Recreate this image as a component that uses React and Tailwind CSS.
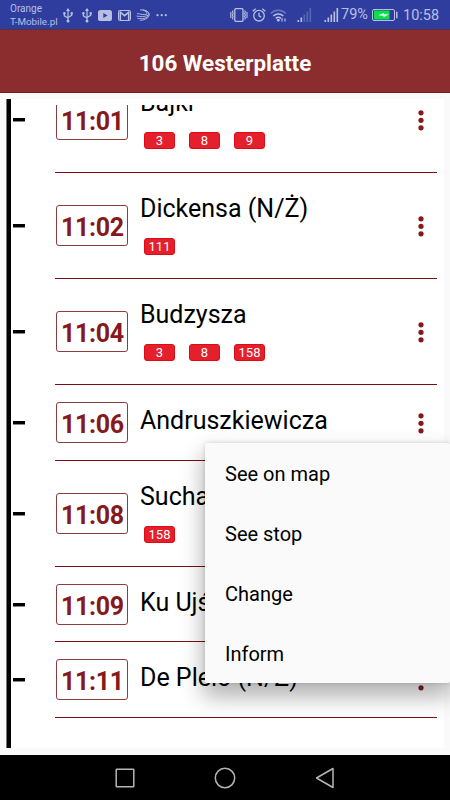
import React from 'react';

const stops = [
  { time: '11:01', name: 'Bajki', lines: ['3', '8', '9'], height: 'h-[106px]' },
  { time: '11:02', name: 'Dickensa (N/Ż)', lines: ['111'], height: 'h-[106px]' },
  { time: '11:04', name: 'Budzysza', lines: ['3', '8', '158'], height: 'h-[106px]' },
  { time: '11:06', name: 'Andruszkiewicza', lines: [], height: 'h-[76px]' },
  { time: '11:08', name: 'Sucharskiego', lines: ['158'], height: 'h-[106px]' },
  { time: '11:09', name: 'Ku Ujściu', lines: [], height: 'h-[75px]' },
  { time: '11:11', name: 'De Plelo (N/Ż)', lines: [], height: 'h-[76px]' },
];

const menuItems = ['See on map', 'See stop', 'Change', 'Inform'];

function UsbIcon({ className }) {
  return (
    <svg className={className} width="10" height="15" viewBox="0 0 10 15" fill="none" stroke="currentColor" strokeWidth="1.2">
      <path d="M5 2v10M1.3 5.5v2.3L5 10M8.7 5.5v1.8L5 9.4" />
      <path d="M5 0 7 3H3z" fill="currentColor" stroke="none" />
      <circle cx="5" cy="12.9" r="1.5" fill="currentColor" stroke="none" />
      <circle cx="1.4" cy="5.2" r="1.2" fill="currentColor" stroke="none" />
      <path d="M7.6 4.2h2.2v2.2H7.6z" fill="currentColor" stroke="none" />
    </svg>
  );
}

function SignalIcon({ className, level }) {
  return (
    <svg className={className} width="15" height="14" viewBox="0 0 15 14" fill="currentColor">
      {[2, 4.5, 7.5, 10.5, 14].map((h, i) => (
        <rect key={h} x={i * 3 + 0.5} y={14 - h} width="1.6" height={h} opacity={i < level ? 1 : 0.3} />
      ))}
    </svg>
  );
}

function StatusBar() {
  return (
    <div className="h-[30px] shrink-0 flex items-start bg-[#2f3e9e] border-b border-[#5a3040] text-[#b9bfe4]">
      <div className="w-[52px] pl-[10px] pt-[2px] text-[10px] leading-[13px] whitespace-nowrap">
        <div>Orange</div>
        <div className="text-[9.8px]">T-Mobile.pl</div>
      </div>
      <UsbIcon className="ml-[11px] mt-[8px]" />
      <UsbIcon className="ml-[9px] mt-[8px]" />
      <svg className="ml-[6px] mt-[10px]" width="14" height="11" viewBox="0 0 14 11">
        <rect width="14" height="11" rx="2.6" fill="currentColor" />
        <path d="M5.3 2.9v5.2l4.3-2.6z" fill="#2f3e9e" />
      </svg>
      <svg className="ml-[6px] mt-[10px]" width="13" height="11" viewBox="0 0 13 11" fill="none" stroke="currentColor">
        <rect x=".5" y=".5" width="12" height="10" rx="1" />
        <path d="M2.3 10V2.2L6.5 5.6l4.2-3.4V10" strokeWidth="1.6" />
      </svg>
      <svg className="ml-[5px] mt-[9px]" width="15" height="12" viewBox="0 0 15 12" fill="none" stroke="currentColor" strokeWidth=".9">
        <path d="M4 .8c4 0 6.6 1.5 7 4.500M6.5.7c4 .5 6 2.500 6 5M9.500 1.500c3.500 1.500 4.500 4 3.500 5.500M1 4.500c3.500.8 7 1.200 9.500.9M.5 7c4 1 8 .8 12-.8M1.500 9.500c4.500.5 9 0 11.500-3M4 11.300c4 0 7-1.500 9-4" />
      </svg>
      <svg className="ml-[5px] mt-[14px]" width="12" height="3" viewBox="0 0 12 3" fill="currentColor">
        <circle cx="1.5" cy="1.2" r="1.1" />
        <circle cx="5.7" cy="1.2" r="1.1" />
        <circle cx="9.8" cy="1.2" r="1.1" />
      </svg>

      <svg className="ml-[62px] mt-[8px]" width="19" height="14" viewBox="0 0 19 14" fill="none" stroke="currentColor" strokeWidth="1.3">
        <rect x="4.800" y=".7" width="8.200" height="12.600" rx="1" />
        <path d="M3.200 2.500 2.400 4l.8 1.500-.8 1.500.8 1.500-.8 1.500.8 1.500M.8 4v6M14.600 2.500l.8 1.500-.8 1.500.8 1.500-.8 1.500.8 1.500-.8 1.500M17 4v6" strokeWidth="1.100" />
      </svg>
      <svg className="ml-[3px] mt-[8px]" width="14" height="14" viewBox="0 0 14 14" fill="none" stroke="currentColor" strokeWidth="1.3">
        <circle cx="7" cy="7.700" r="5.300" />
        <path d="M7 4.700v3.200l2.300 1.400M.7 3.300 3.700.8M13.300 3.300l-3-2.500" />
      </svg>
      <svg className="ml-[4px] mt-[9px]" width="17" height="13" viewBox="0 0 17 13" fill="none" stroke="currentColor" strokeWidth="1.5">
        <path d="M.8 4.500C5 .3 11.500.3 15.700 4.500" opacity=".45" />
        <path d="M3.300 7c2.800-2.700 7.200-2.700 10 0M5.700 9.400c1.500-1.400 3.700-1.400 5.200 0" />
        <circle cx="8.300" cy="11.200" r="1.400" fill="currentColor" stroke="none" />
        <path d="M12 9v3.500M15 9.500v3" strokeWidth="1.200" />
      </svg>
      <SignalIcon className="ml-[10px] mt-[8px]" level={2} />
      <SignalIcon className="ml-[12px] mt-[8px]" level={5} />
      <span className="ml-[2px] mt-[6px] w-[28px] text-[14.5px] leading-[18px] whitespace-nowrap">79%</span>
      <svg className="ml-[3px] mt-[9px]" width="26" height="12" viewBox="0 0 26 12" fill="none">
        <rect x=".5" y=".5" width="22" height="11" rx="1.5" stroke="currentColor" />
        <rect x="2" y="1.5" width="15.5" height="9" fill="#0ce04a" />
        <path d="M6 6.200 12 4v1.300h5L11.500 8.200V6.700z" fill="#e8fff0" />
        <path d="M24.800 2.800v6.400" stroke="currentColor" strokeWidth="1.5" />
      </svg>
      <span className="ml-[5px] mt-[7px] text-[14.5px] leading-[18px]">10:58</span>
    </div>
  );
}

function MoreIcon() {
  return (
    <svg className="ml-auto mr-[13px] shrink-0" width="6" height="22" viewBox="0 0 6 22" fill="#86181a">
      <circle cx="3" cy="3.8" r="2.6" />
      <circle cx="3" cy="11.3" r="2.6" />
      <circle cx="3" cy="18.8" r="2.6" />
    </svg>
  );
}

function StopRow({ stop }) {
  const hasLines = stop.lines.length > 0;

  return (
    <div className={`flex shrink-0 ${stop.height}`}>
      <div className="w-[43px] shrink-0 flex items-center pl-px">
        <div className="w-[12px] h-[4px] border-b border-[#888] bg-black" />
      </div>
      <div className="w-[382px] flex items-center border-b border-[#7a0d0f]">
        <div className="ml-px w-[72px] h-[41px] shrink-0 rounded-[3px] border border-[#8f3a3c] pl-[4px] pt-[2px] text-[25px] leading-[40px] font-bold tracking-[-0.3px] text-[#86191b]">
          {stop.time}
        </div>
        <div className={hasLines ? 'ml-[12px] mt-[3px] whitespace-nowrap' : 'ml-[12px] -mt-[3px] whitespace-nowrap'}>
          <div className="text-[25px] leading-[34px] text-black">{stop.name}</div>
          {hasLines && (
            <div className="mt-[12px] mb-[7px] ml-[4px] flex gap-[14px]">
              {stop.lines.map((line) => (
                <span key={line} className="w-[31px] h-[17px] rounded-[3px] border border-[#e10a14] bg-[#e3202c] text-center text-[13px] leading-[16px] text-white">
                  {line}
                </span>
              ))}
            </div>
          )}
        </div>
        <MoreIcon />
      </div>
    </div>
  );
}

export default function App() {
  return (
    <div className="relative w-[450px] h-[800px] flex flex-col overflow-hidden bg-[#fafafa] font-['Roboto',sans-serif]">
      <StatusBar />

      <div className="h-[63px] shrink-0 flex items-center justify-center pt-[4px] bg-[#8b2d2e] border-b border-[#801c1e]">
        <h1 className="text-[22.4px] leading-[30px] font-bold text-white">106 Westerplatte</h1>
      </div>

      {/* Timetable */}
      <div className="h-[662px] shrink-0 pt-[6px] pb-[7px] pl-[6px] pr-[6px] flex">
        <div className="w-[5px] shrink-0 bg-black border-l border-[#777]" />
        <div className="flex-1 pt-[6px] bg-white">
          <div className="h-full overflow-hidden">
            <div className="-mt-[38px] flex flex-col pl-px">
              {stops.map((stop) => (
                <StopRow key={stop.time} stop={stop} />
              ))}
            </div>
          </div>
        </div>
      </div>

      {/* Navigation bar */}
      <div className="h-[45px] shrink-0 flex items-center justify-center gap-[79px] bg-black">
        <svg width="20" height="20" viewBox="0 0 20 20" fill="none" stroke="#b5b5b5" strokeWidth="1.5">
          <rect x="1.2" y="1.2" width="17.6" height="17.6" rx=".5" />
        </svg>
        <svg width="22" height="22" viewBox="0 0 22 22" fill="none" stroke="#b5b5b5" strokeWidth="1.5">
          <circle cx="11" cy="11" r="9.7" />
        </svg>
        <svg width="20" height="22" viewBox="0 0 20 22" fill="none" stroke="#b5b5b5" strokeWidth="1.5" strokeLinejoin="round">
          <path d="M18 1.5v19L1.5 11z" />
        </svg>
      </div>

      {/* Popup menu of the selected stop */}
      <div className="absolute left-[205px] top-[443px] w-[245px] rounded-[2px] bg-[#fafafa] shadow-[0_12px_22px_2px_rgba(0,0,0,0.3),0_0_4px_rgba(0,0,0,0.14)]">
        {menuItems.map((item) => (
          <div key={item} className="h-[60px] flex items-center pl-[20px] pt-[2px] text-[20px] text-black">
            {item}
          </div>
        ))}
      </div>
    </div>
  );
}
